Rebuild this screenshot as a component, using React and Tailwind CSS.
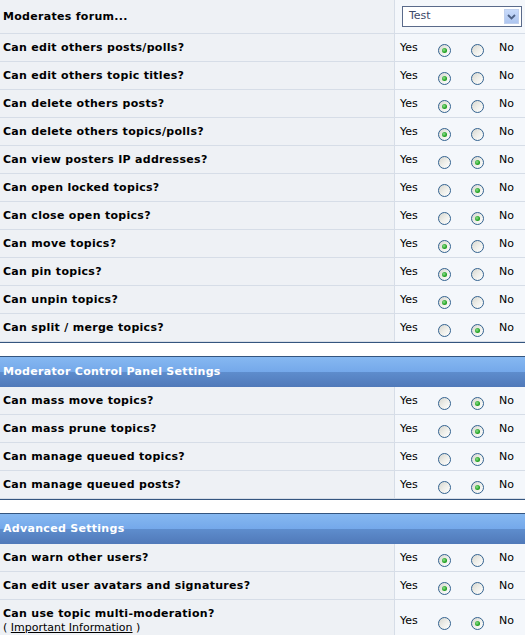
import React from 'react';

const lightBorder = 'border-[#d6dde7]';

const Radio = ({ checked }) => (
  <span className="mt-[6px] w-[13px] h-[13px] rounded-full border border-[#33628f] bg-[linear-gradient(135deg,#d6d6cf_0%,#eeeee9_50%,#ffffff_100%)] flex items-center justify-center shrink-0">
    {checked && (
      <span className="w-[5px] h-[5px] rounded-full bg-[radial-gradient(circle_at_40%_40%,#8fe08f_0%,#21a121_60%,#1a861a_100%)]" />
    )}
  </span>
);

const YesNo = ({ yes }) => (
  <div className="flex-1 bg-[#f4f7fb] flex items-center pl-[5px]">
    <span className="w-[38px] mt-[2px]">Yes</span>
    <Radio checked={yes} />
    <span className="w-[20px]" />
    <Radio checked={!yes} />
    <span className="ml-[15px] mt-[2px]">No</span>
  </div>
);

const Row = ({ label, yes, children }) => (
  <div className={`flex border-b ${lightBorder}`}>
    <div className={`w-[395px] shrink-0 bg-[#eef1f5] border-r ${lightBorder} pl-[3px] pt-[7px] pb-[6px] leading-[14px]`}>
      {children || <span className="font-bold tracking-[0.3px]">{label}</span>}
    </div>
    <YesNo yes={yes} />
  </div>
);

const Header = ({ title }) => (
  <div className="h-[31px] flex items-center pl-[3px] pt-[1px] text-white font-bold tracking-[0.3px] border-t border-[#34557f] bg-[linear-gradient(to_bottom,#86b8f1_0%,#74a8ea_50%,#5e8dcd_50%,#5079b9_100%)]">
    {title}
  </div>
);

const Spacer = () => (
  <div className="h-[14px] bg-white border-t border-[#34557f]" />
);

const mainRows = [
  ['Can edit others posts/polls?', true],
  ['Can edit others topic titles?', true],
  ['Can delete others posts?', true],
  ['Can delete others topics/polls?', true],
  ['Can view posters IP addresses?', false],
  ['Can open locked topics?', false],
  ['Can close open topics?', false],
  ['Can move topics?', true],
  ['Can pin topics?', true],
  ['Can unpin topics?', true],
  ['Can split / merge topics?', false],
];

const mcpRows = [
  ['Can mass move topics?', false],
  ['Can mass prune topics?', false],
  ['Can manage queued topics?', false],
  ['Can manage queued posts?', false],
];

export default function App() {
  return (
    <div className="w-[525px] min-h-[635px] bg-white text-black text-[11px] font-['DejaVu_Sans','Verdana',sans-serif]">
      {/* Forum selector */}
      <div className={`flex h-[34px] border-b ${lightBorder}`}>
        <div className={`w-[395px] shrink-0 bg-[#eef1f5] border-r ${lightBorder} pl-[3px] pt-[1px] flex items-center font-bold tracking-[0.3px]`}>
          Moderates forum...
        </div>
        <div className="flex-1 bg-[#f4f7fb] flex items-center pl-[7px]">
          <div className="w-[120px] h-[21px] border border-[#5a6a8a] bg-white flex items-center justify-between pl-[6px] pr-[2px]">
            <span className="text-[#3c4a6a]">Test</span>
            <span className="w-[15px] h-[15px] bg-[linear-gradient(to_bottom,#c8dafa,#aec6f0)] border border-[#c0d0ee] flex items-center justify-center">
              <svg width="9" height="6" viewBox="0 0 9 6">
                <path d="M1 1 L4.5 4.5 L8 1" fill="none" stroke="#4d6185" strokeWidth="1.8" />
              </svg>
            </span>
          </div>
        </div>
      </div>

      {mainRows.map(([label, yes]) => (
        <Row key={label} label={label} yes={yes} />
      ))}

      <Spacer />
      <Header title="Moderator Control Panel Settings" />
      {mcpRows.map(([label, yes]) => (
        <Row key={label} label={label} yes={yes} />
      ))}

      <Spacer />
      <Header title="Advanced Settings" />
      <Row label="Can warn other users?" yes={true} />
      <Row label="Can edit user avatars and signatures?" yes={true} />
      <Row yes={false}>
        <div className="font-bold tracking-[0.3px]">Can use topic multi-moderation?</div>
        <div>
          ( <span className="underline">Important Information</span> )
        </div>
      </Row>
    </div>
  );
}
